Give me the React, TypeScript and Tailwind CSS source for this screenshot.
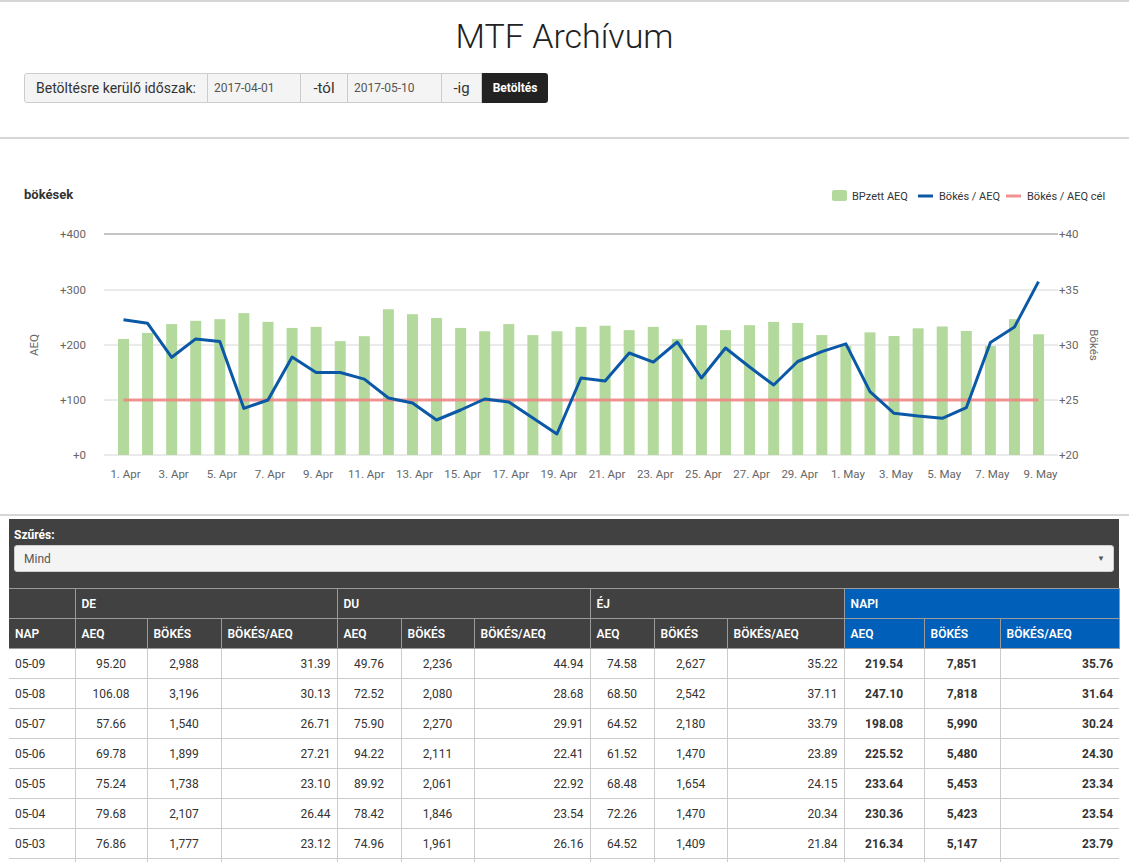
import React from 'react';

const AEQ = [
  211, 222, 238, 244, 247, 258, 242, 231, 233, 207, 216, 265, 256, 249, 231, 225, 238, 218, 225, 233,
  235, 227, 233, 211, 236, 227, 236, 242, 240, 218, 198.5, 223, 216.34, 230.36, 233.64, 225.52, 198.08,
  247.1, 219.54,
];

const RATIO = [
  32.3, 31.97, 28.88, 30.55, 30.33, 24.24, 25.0, 28.9, 27.5, 27.5, 26.9, 25.18, 24.73, 23.18, 24.09,
  25.09, 24.82, 23.36, 21.91, 27.0, 26.73, 29.27, 28.45, 30.27, 27.0, 29.73, 28.0, 26.36, 28.5, 29.4,
  30.1, 25.76, 23.79, 23.54, 23.34, 24.3, 30.24, 31.64, 35.76,
];

const ROWS = [
  ['05-09', '95.20', '2,988', '31.39', '49.76', '2,236', '44.94', '74.58', '2,627', '35.22', '219.54', '7,851', '35.76'],
  ['05-08', '106.08', '3,196', '30.13', '72.52', '2,080', '28.68', '68.50', '2,542', '37.11', '247.10', '7,818', '31.64'],
  ['05-07', '57.66', '1,540', '26.71', '75.90', '2,270', '29.91', '64.52', '2,180', '33.79', '198.08', '5,990', '30.24'],
  ['05-06', '69.78', '1,899', '27.21', '94.22', '2,111', '22.41', '61.52', '1,470', '23.89', '225.52', '5,480', '24.30'],
  ['05-05', '75.24', '1,738', '23.10', '89.92', '2,061', '22.92', '68.48', '1,654', '24.15', '233.64', '5,453', '23.34'],
  ['05-04', '79.68', '2,107', '26.44', '78.42', '1,846', '23.54', '72.26', '1,470', '20.34', '230.36', '5,423', '23.54'],
  ['05-03', '76.86', '1,777', '23.12', '74.96', '1,961', '26.16', '64.52', '1,409', '21.84', '216.34', '5,147', '23.79'],
  // next row only shows its borders at the bottom edge
  ['', '', '', '', '', '', '', '', '', '', '', '', ''],
];

const COLS = [66, 72, 74, 116, 64, 73, 116, 64, 73, 117, 80, 76, 119];
const ALIGN = ['text-left', 'text-center', 'text-center', 'text-right'];

const cx = (i: number) => 123.5 + i * 24.08;
const yAeq = (v: number) => 455 - v * 0.55;
const yRatio = (v: number) => 455 - (v - 20) * 11;

function label(i: number) {
  return i < 30 ? `${i + 1}. Apr` : `${i - 29}. May`;
}

function Chart() {
  const grid = [234, 290, 345, 400, 455];
  const left = ['+400', '+300', '+200', '+100', '+0'];
  const right = ['+40', '+35', '+30', '+25', '+20'];
  const pts = RATIO.map((v, i) => `${cx(i).toFixed(1)},${yRatio(v).toFixed(1)}`).join(' ');

  return (
    <svg width={1129} height={375} viewBox="0 139 1129 375" className="block" style={{ fontFamily: 'Roboto, sans-serif' }}>
      <text x={24} y={199} fontSize={13} fontWeight={700} fill="#333">
        bökések
      </text>

      <rect x={832} y={190} width={15} height={11} rx={2} fill="#b3da9c" />
      <text x={852} y={200} fontSize={11} fill="#333">BPzett AEQ</text>
      <line x1={918} y1={196} x2={933} y2={196} stroke="#0b58a6" strokeWidth={3} />
      <text x={939} y={200} fontSize={11} fill="#333">Bökés / AEQ</text>
      <line x1={1006} y1={196} x2={1021} y2={196} stroke="#f39090" strokeWidth={3} />
      <text x={1027} y={200} fontSize={11} fill="#333">Bökés / AEQ cél</text>

      {grid.map((y, i) => (
        <line
          key={y}
          x1={104}
          x2={1058}
          y1={y}
          y2={y}
          stroke={i === 0 ? '#c4c4c4' : '#d6d6d6'}
          strokeWidth={i === 0 ? 2 : 1}
        />
      ))}
      {left.map((t, i) => (
        <text key={t} x={86} y={grid[i] + 4} fontSize={11.5} fill="#666" textAnchor="end">
          {t}
        </text>
      ))}
      {right.map((t, i) => (
        <text key={t} x={1059} y={grid[i] + 4} fontSize={11.5} fill="#666">
          {t}
        </text>
      ))}
      <text x={38} y={345} fontSize={11.5} fill="#666" textAnchor="middle" transform="rotate(-90 38 345)">
        AEQ
      </text>
      <text x={1090} y={345} fontSize={11.5} fill="#666" textAnchor="middle" transform="rotate(90 1090 345)">
        Bökés
      </text>

      {AEQ.map((v, i) => (
        <rect key={i} x={cx(i) - 5.5} y={yAeq(v)} width={11} height={455 - yAeq(v)} fill="#b3da9c" />
      ))}

      <line x1={123.5} x2={1038.5} y1={400} y2={400} stroke="#f08282" strokeOpacity={0.85} strokeWidth={3} />
      <polyline points={pts} fill="none" stroke="#0b58a6" strokeWidth={3} strokeLinejoin="round" />

      {AEQ.map((_, i) =>
        i % 2 === 0 ? (
          <text key={i} x={cx(i) + 2} y={478} fontSize={11.5} fill="#666" textAnchor="middle">
            {label(i)}
          </text>
        ) : null
      )}
    </svg>
  );
}

function DataTable() {
  const head = 'border border-[#9a9a9a] px-[6px] text-left font-semibold text-white';
  return (
    <table className="w-[1110px] table-fixed border-collapse text-[12px]">
      <colgroup>
        {COLS.map((w, i) => (
          <col key={i} style={{ width: w }} />
        ))}
      </colgroup>
      <thead>
        <tr className="h-[30px]">
          <th className={`${head} bg-[#414141] border-l-0`}></th>
          <th colSpan={3} className={`${head} bg-[#414141]`}>DE</th>
          <th colSpan={3} className={`${head} bg-[#414141]`}>DU</th>
          <th colSpan={3} className={`${head} bg-[#414141]`}>ÉJ</th>
          <th colSpan={3} className={`${head} bg-[#005fb8] border-[#005fb8] border-l-[#9a9a9a]`}>NAPI</th>
        </tr>
        <tr className="h-[30px]">
          <th className={`${head} bg-[#414141] border-l-0`}>NAP</th>
          {['DE', 'DU', 'ÉJ'].map((g) =>
            ['AEQ', 'BÖKÉS', 'BÖKÉS/AEQ'].map((t) => (
              <th key={g + t} className={`${head} bg-[#414141]`}>
                {t}
              </th>
            ))
          )}
          {['AEQ', 'BÖKÉS', 'BÖKÉS/AEQ'].map((t) => (
            <th key={'N' + t} className={`${head} bg-[#005fb8] border-[#9a9a9a]`}>
              {t}
            </th>
          ))}
        </tr>
      </thead>
      <tbody>
        {ROWS.map((r, ri) => (
          <tr key={ri} className="h-[30px]">
            {r.map((c, i) => (
              <td
                key={i}
                className={`border border-[#cccccc] px-[6px] text-[#333] ${
                  i === 0 ? 'text-left border-l-0' : ALIGN[((i - 1) % 3) + 1]
                } ${i >= 10 ? 'font-bold' : ''} ${i === 12 ? 'border-r-0' : ''}`}
              >
                {c}
              </td>
            ))}
          </tr>
        ))}
      </tbody>
    </table>
  );
}

export default function App() {
  return (
    <div className="h-[862px] overflow-hidden bg-white" style={{ fontFamily: 'Roboto, "Open Sans", sans-serif' }}>
      <header className="h-[139px] border-t-2 border-b-2 border-[#d6d6d6]">
        <h1 className="pt-[13px] text-center text-[34px] font-light leading-[42px] text-[#222]">MTF Archívum</h1>
        <div className="ml-[24px] mt-[16px] flex h-[30px] w-max text-[#333]">
          <div className="flex w-[184px] items-center justify-center rounded-l-[3px] border border-[#cccccc] bg-[#f4f4f4] text-[14px]">
            Betöltésre kerülő időszak:
          </div>
          <div className="flex w-[92px] items-center border-y border-[#cccccc] bg-[#f4f4f4] pl-[6px] text-[12px] text-[#555]">
            2017-04-01
          </div>
          <div className="flex w-[48px] items-center justify-center border border-[#cccccc] bg-[#f4f4f4] text-[15px]">
            -tól
          </div>
          <div className="flex w-[93px] items-center border-y border-[#cccccc] bg-[#f4f4f4] pl-[6px] text-[12px] text-[#555]">
            2017-05-10
          </div>
          <div className="flex w-[41px] items-center justify-center border border-[#cccccc] bg-[#f4f4f4] text-[15px]">
            -ig
          </div>
          <button className="flex w-[66px] items-center justify-center rounded-r-[3px] bg-[#222] text-[12px] font-bold text-white">
            Betöltés
          </button>
        </div>
      </header>

      <section className="border-b-2 border-[#d6d6d6]">
        <Chart />
      </section>

      <div className="ml-[9px] mt-[3px] w-[1110px]">
        <div className="bg-[#414141] px-[5px] pb-[16px] pt-[8px]">
          <div className="text-[12px] font-bold leading-[17px] text-white">Szűrés:</div>
          <div className="mt-[1px] flex h-[27px] items-center justify-between rounded-[3px] border border-[#cfcfcf] bg-[#f4f4f4] pl-[9px] pr-[8px] text-[12px] text-[#555]">
            <span>Mind</span>
            <span className="text-[8px] text-[#555]">▼</span>
          </div>
        </div>
        <DataTable />
      </div>
    </div>
  );
}
